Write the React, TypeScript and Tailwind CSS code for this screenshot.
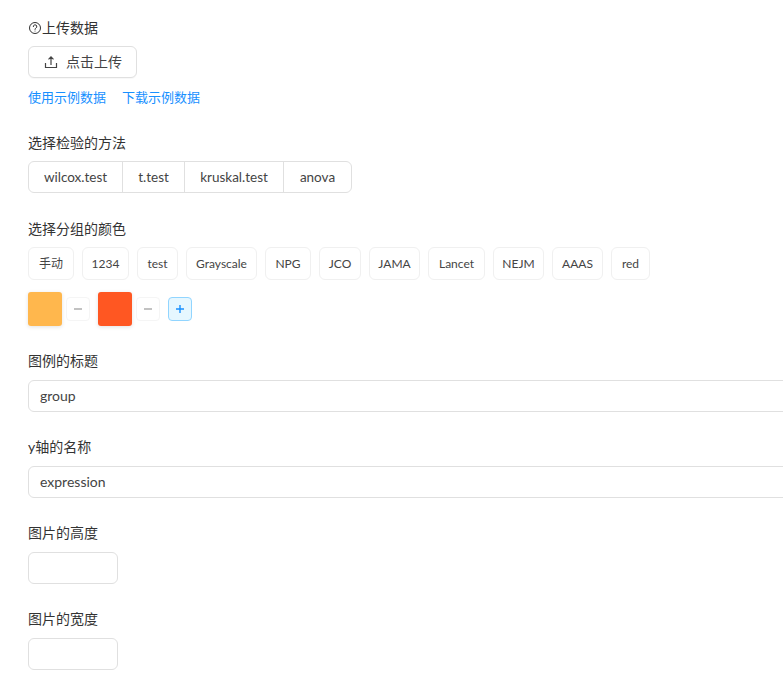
const methods = [
  { name: 'wilcox.test', w: 'w-[93px]' },
  { name: 't.test', w: 'w-[62px]' },
  { name: 'kruskal.test', w: 'w-[99px]' },
  { name: 'anova', w: 'w-[68px]' },
]
const palettes = [
  { name: '手动', w: 'w-[46px]' },
  { name: '1234', w: 'w-[47px]' },
  { name: 'test', w: 'w-[41px]' },
  { name: 'Grayscale', w: 'w-[71px]' },
  { name: 'NPG', w: 'w-[46px]' },
  { name: 'JCO', w: 'w-[42px]' },
  { name: 'JAMA', w: 'w-[51px]' },
  { name: 'Lancet', w: 'w-[57px]' },
  { name: 'NEJM', w: 'w-[51px]' },
  { name: 'AAAS', w: 'w-[51px]' },
  { name: 'red', w: 'w-[39px]' },
]
const colors = ['bg-[#ffb74d]', 'bg-[#ff5722]']

function Label({ text }: { text: string }) {
  return <div className="h-[22px] mb-[7px] text-sm leading-[22px] text-[#333]">{text}</div>
}

function TextBox({ value, small }: { value?: string; small?: boolean }) {
  return (
    <div className={`h-8 px-[11px] border border-[#e0e0e0] rounded-md bg-white text-sm leading-[30px] text-[#444] ${small ? 'w-[90px]' : 'w-[800px]'}`}>
      {value}
    </div>
  )
}

export default function App() {
  return (
    <div className="w-[783px] h-[699px] overflow-hidden bg-white pl-7 pt-[17px] font-['Lato','Noto_Sans_CJK_SC',sans-serif]">
      <div className="mb-[7px] flex h-[22px] items-center text-sm text-[#333]">
        <svg width="14" height="14" viewBox="0 0 14 14" fill="none" stroke="#333" strokeWidth="1" className="shrink-0">
          <circle cx="7" cy="7" r="5.5" />
          <path d="M5.3 5.6a1.75 1.75 0 1 1 2.6 1.5c-.6.35-.9.7-.9 1.3" strokeLinecap="round" />
          <circle cx="7" cy="10" r=".5" fill="#333" stroke="none" />
        </svg>
        上传数据
      </div>

      <div className="flex h-8 w-[109px] items-center rounded-md border border-[#e0e0e0] bg-white pl-[15px] text-sm text-[#444] shadow-[0_1px_1px_rgba(0,0,0,0.03)]">
        <svg width="14" height="14" viewBox="0 0 14 14" fill="none" stroke="#444" strokeWidth="1.2" className="mr-2 shrink-0">
          <path d="M1.5 8v4.5h11V8M7 10V2M4.5 4.4 7 1.9l2.5 2.5" />
        </svg>
        <span>点击上传</span>
      </div>

      <div className="mt-[8px] flex h-[22px] gap-4 text-[13px] leading-[22px] text-[#1890ff]">
        <span>使用示例数据</span>
        <span>下载示例数据</span>
      </div>

      <div className="mt-[24px]">
        <Label text="选择检验的方法" />
        <div className="flex h-8 w-max rounded-md border border-[#e0e0e0] bg-white text-[13.5px] text-[#444]">
          {methods.map((m, i) => (
            <div key={m.name} className={`flex items-center justify-center ${m.w} ${i > 0 ? 'border-l border-[#e0e0e0]' : ''}`}>
              {m.name}
            </div>
          ))}
        </div>
      </div>

      <div className="mt-[25px]">
        <Label text="选择分组的颜色" />
        <div className="flex gap-2">
          {palettes.map(p => (
            <div key={p.name} className={`flex h-[33px] items-center justify-center rounded-md border border-[#f0f0f0] bg-white text-xs text-[#444] ${p.w}`}>
              {p.name}
            </div>
          ))}
        </div>
        <div className="mt-3 flex items-center">
          {colors.map(c => (
            <div key={c} className="mr-2 flex items-center">
              <div className={`h-[34px] w-[34px] rounded-[3px] shadow-[0_1px_4px_rgba(0,0,0,0.12)] ${c}`} />
              <div className="ml-1 flex h-6 w-6 items-center justify-center rounded border border-[#f5f5f5] bg-white text-[#999]">
                <svg width="10" height="10" viewBox="0 0 10 10" stroke="currentColor" strokeWidth="1.2"><path d="M1 5h8" /></svg>
              </div>
            </div>
          ))}
          <div className="flex h-6 w-6 items-center justify-center rounded border border-[#91d5ff] bg-[#e6f7ff] text-[#1890ff]">
            <svg width="10" height="10" viewBox="0 0 10 10" stroke="currentColor" strokeWidth="1.4"><path d="M1 5h8M5 1v8" /></svg>
          </div>
        </div>
      </div>

      <div className="mt-6 [&>div:first-child]:mb-2">
        <Label text="图例的标题" />
        <TextBox value="group" />
      </div>
      <div className="mt-6 [&>div:first-child]:mb-2">
        <Label text="y轴的名称" />
        <TextBox value="expression" />
      </div>
      <div className="mt-6 [&>div:first-child]:mb-2">
        <Label text="图片的高度" />
        <TextBox small />
      </div>
      <div className="mt-6 [&>div:first-child]:mb-2">
        <Label text="图片的宽度" />
        <TextBox small />
      </div>
    </div>
  )
}
